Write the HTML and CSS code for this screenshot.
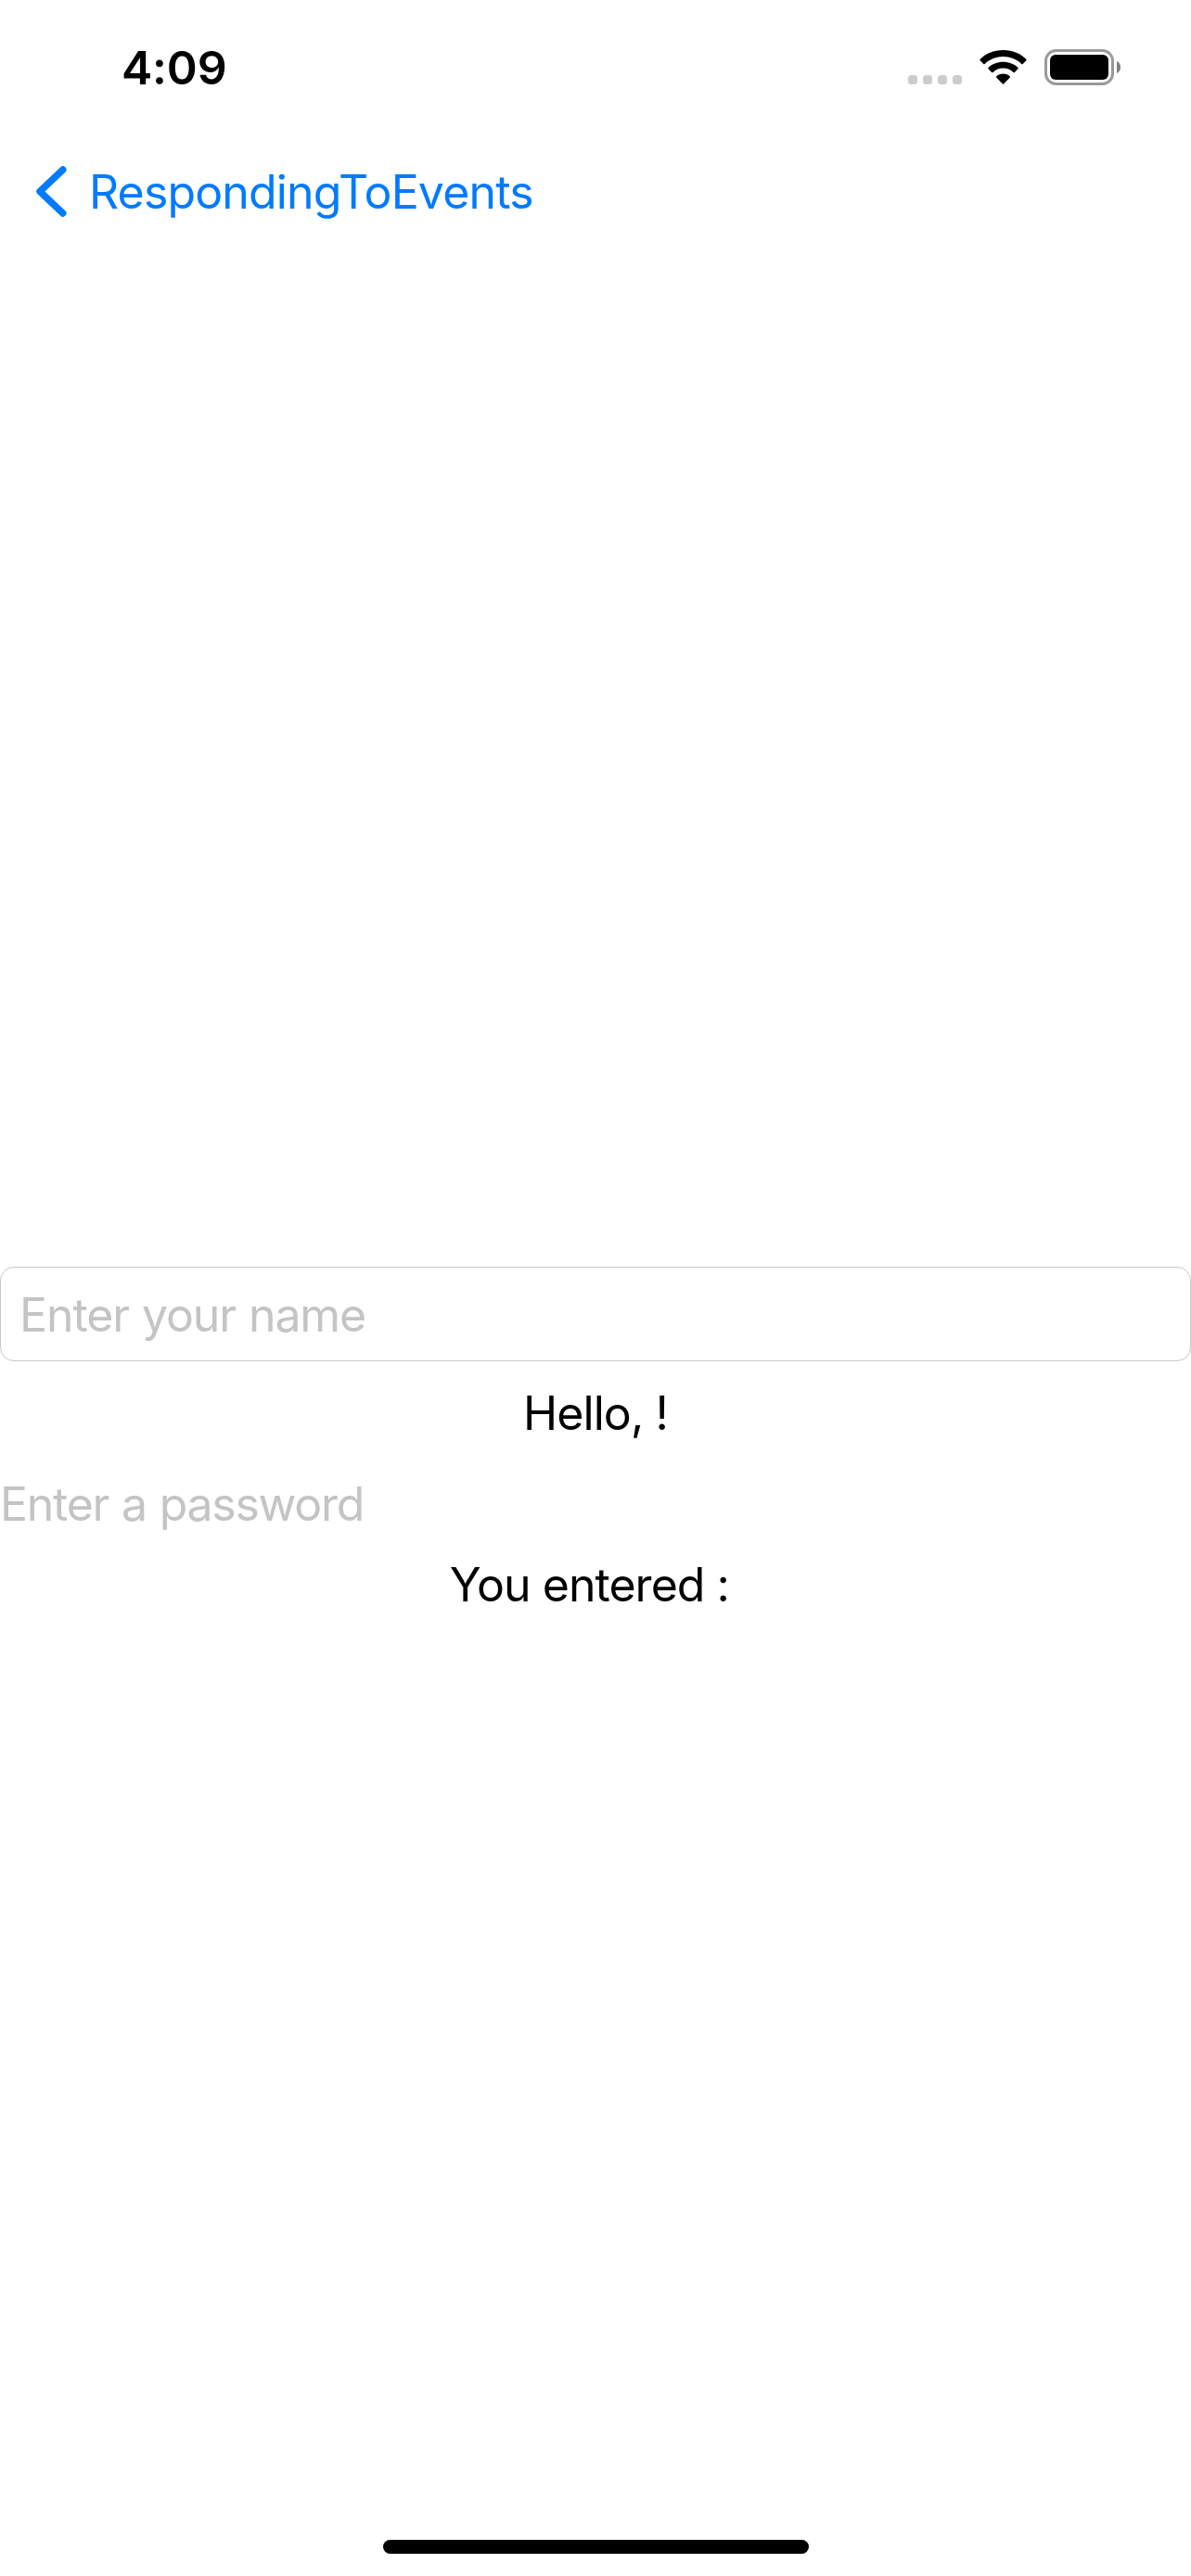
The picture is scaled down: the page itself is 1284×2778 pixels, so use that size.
FILE: index.html
```html
<!DOCTYPE html>
<html lang="en">
<head>
<meta charset="utf-8">
<title>RespondingToEvents</title>
<link rel="stylesheet" href="styles.css">
</head>
<body>
<div class="screen">
  <header class="status">
    <span class="time">4:09</span>
    <div class="indicators">
      <div class="signal"><i class="dot"></i><i class="dot"></i><i class="dot"></i><i class="dot"></i></div>
      <svg class="wifi" width="52" height="38" viewBox="0 0 52 38">
        <path d="M25.5 0C35.500 0 44.500 3.800 50.300 9.800Q51 10.600 50.300 11.300L46.700 14.900Q46 15.600 45.300 14.900A28.500 28.500 0 0 0 5.700 14.900Q5 15.600 4.300 14.900L.7 11.300Q0 10.600 .7 9.800C6.500 3.800 15.500 0 25.500 0Z"/>
        <path d="M25.500 12.700C31.900 12.700 37.500 15 41.500 18.900Q42.200 19.600 41.500 20.300L37.900 23.900Q37.200 24.600 36.400 23.900A15.800 15.800 0 0 0 14.600 23.900Q13.800 24.600 13.100 23.900L9.500 20.300Q8.800 19.600 9.500 18.900C13.500 15 19.100 12.700 25.500 12.700Z"/>
        <path d="M25.500 25.600C28.300 25.600 30.800 26.600 32.700 28.300Q33.400 29 32.700 29.700L26.300 36.300Q25.500 37.100 24.700 36.300L18.300 29.700Q17.600 29 18.300 28.300C20.200 26.600 22.700 25.600 25.500 25.600Z"/>
      </svg>
      <svg class="battery" width="83" height="39" viewBox="0 0 83 39">
        <rect x="1.500" y="1.500" width="72" height="36" rx="11" fill="none" stroke="#999" stroke-width="3"/>
        <rect x="6" y="6" width="63" height="27" rx="6"/>
        <path d="M78 13C80.500 14 82 16.500 82 19.500S80.500 25 78 26Z" fill="#808080"/>
      </svg>
    </div>
  </header>
  <nav class="nav">
    <svg class="chevron" width="34" height="57" viewBox="0 0 34 57">
      <path d="M29.800 5L5 28.500L29.800 52" fill="none" stroke="#007aff" stroke-width="7.400" stroke-linecap="round" stroke-linejoin="round"/>
    </svg>
    <span class="back">RespondingToEvents</span>
  </nav>
  <main class="content">
    <div class="field"><span class="name-hint">Enter your name</span></div>
    <p class="greeting">Hello, !</p>
    <div class="password"><span class="password-hint">Enter a password</span></div>
    <p class="entered">You entered : </p>
  </main>
  <footer class="home"><div class="home-bar"></div></footer>
</div>
</body>
</html>
```
FILE: styles.css
```css
* { box-sizing: border-box; }
body { margin: 0; background: #fff; }
.screen {
  width: 1284px;
  height: 2778px;
  display: flex;
  flex-direction: column;
  font-family: Inter, "Liberation Sans", sans-serif;
  font-size: 50px;
  line-height: 60px;
  color: #000;
}
.status {
  height: 141px;
  padding: 43px 75px 0 131px;
  display: flex;
  justify-content: space-between;
  align-items: flex-start;
}
.time { font-weight: 600; letter-spacing: -0.2px; }
.indicators { display: flex; padding-top: 10px; }
.signal { display: flex; gap: 6px; padding-top: 28px; }
.dot { width: 10px; height: 10px; border-radius: 3.500px; background: #ccc; }
.wifi { margin: 1px 0 0 19px; }
.battery { margin-left: 18px; }
.nav {
  height: 132px;
  padding: 36px 0 0 38px;
  display: flex;
  align-items: flex-start;
}
.chevron { margin-top: 1px; }
.back { margin-left: 24px; color: #007aff; letter-spacing: -0.85px; }
.content { flex: 1; padding-top: 1093px; }
.field {
  height: 102px;
  padding: 21px 0 0 20px;
  border: 1px solid #c8c8c9;
  border-radius: 15px;
}
.name-hint, .password-hint { color: #c4c4c6; }
.name-hint { letter-spacing: -1.1px; word-spacing: 1px; }
.greeting, .entered { margin: 0; text-align: center; }
.greeting { margin-top: 26px; letter-spacing: -0.9px; }
.password { margin-top: 38px; letter-spacing: -1.25px; word-spacing: 1px; }
.entered { margin-top: 27px; letter-spacing: -0.95px; white-space: pre; }
.home { height: 39px; display: flex; justify-content: center; }
.home-bar { width: 459px; height: 15px; border-radius: 8px; background: #000; }
```
